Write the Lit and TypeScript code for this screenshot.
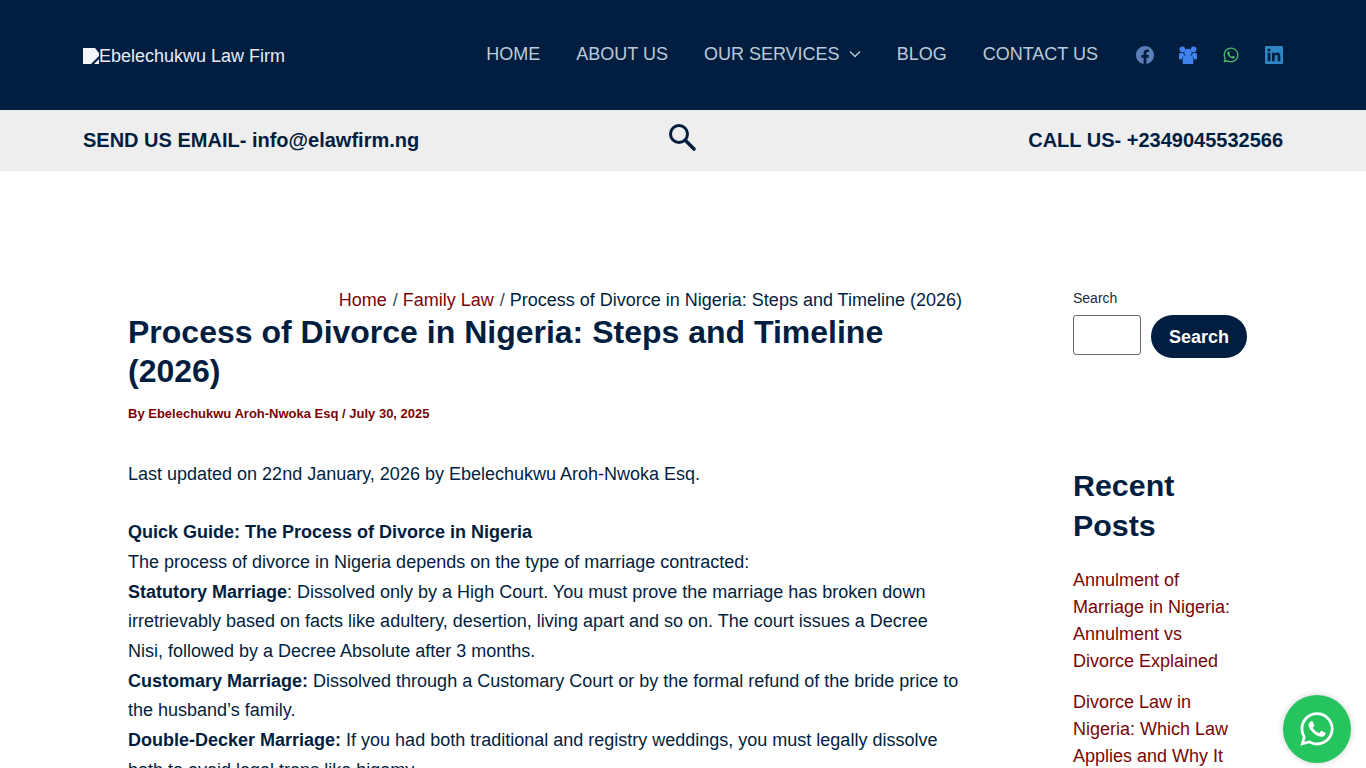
import { LitElement, html, css } from "lit";
import { customElement } from "lit/decorators.js";

@customElement("app-root")
export class AppRoot extends LitElement {
  static styles = css`
    :host { display: block; height: 768px; overflow: hidden; position: relative; background: #fff; font-family: "Liberation Sans", Arial, sans-serif; color: #011e40; }
    a { text-decoration: none; color: inherit; }
    .top { height: 110px; background: #011e40; display: flex; align-items: center; justify-content: space-between; padding: 0 83px; }
    .logo { display: flex; align-items: center; color: #e4edf6; font-size: 18px; line-height: 20px; padding-top: 2px; }
    .broken { width: 16px; height: 16px; display: block; flex: none; }
    .right { display: flex; align-items: center; }
    nav { display: flex; gap: 36px; color: #bccbda; font-size: 18px; line-height: 24px; padding-bottom: 3px; }
    nav a { display: flex; align-items: center; gap: 9px; }
    .social { display: flex; gap: 25px; margin-left: 38px; }
    .social svg { width: 18px; height: 18px; display: block; }
    .bar { height: 61px; background: #eeeeee; display: grid; grid-template-columns: 1fr auto 1fr; align-items: center; padding: 0 83px; font-size: 20px; font-weight: 700; color: #011e40; }
    .bar .mail { white-space: nowrap; }
    .bar .call { text-align: right; white-space: nowrap; }
    .bar svg { width: 30px; height: 30px; display: block; margin: -7px 1px 0 -1px; }
    .wrap { display: flex; padding: 117px 119px 0 128px; }
    main { width: 834px; flex: none; }
    .crumbs { text-align: right; font-size: 18px; line-height: 24px; color: #3a4a5e; }
    .crumbs a { color: #7a0505; margin-right: 1px; }
    .crumbs .cur { color: #011e40; }
    h1 { margin: 0; font-size: 32px; line-height: 39px; font-weight: 700; color: #011e40; padding-top: 1px; }
    .meta { font-size: 13px; line-height: 20px; font-weight: 700; color: #7a0505; margin-top: 13px; }
    .body { margin-top: 36px; font-size: 18px; line-height: 29.7px; color: #011e40; }
    .body p { margin: 0; }
    .body .gap { margin-bottom: 28.5px; }
    aside { margin-left: 111px; width: 174px; flex: none; }
    .label { font-size: 14px; line-height: 20px; color: #1d2b3a; display: block; }
    .search { display: flex; gap: 10px; margin-top: 7px; align-items: flex-start; }
    .input { width: 68px; height: 40px; border: 1px solid #666b70; border-radius: 3px; background: #fff; box-sizing: border-box; display: block; }
    .btn { width: 96px; height: 43px; border-radius: 22px; background: #011e40; color: #fff; font: 700 18px/42px "Liberation Sans", Arial, sans-serif; text-align: center; border: 0; padding: 1px 0 0; box-sizing: border-box; }
    h2 { margin: 107px 0 0; font-size: 30.4px; line-height: 40px; font-weight: 700; color: #011e40; }
    ul { list-style: none; margin: 22px 0 0; padding: 0; font-size: 18px; line-height: 27px; color: #7a0505; }
    li { margin-bottom: 14px; }
    .wa { position: absolute; left: 1283px; top: 695px; width: 68px; height: 68px; border-radius: 50%; background: #25c45f; display: flex; align-items: center; justify-content: center; box-shadow: 0 0 6px rgba(0,0,0,.2); }
    .wa svg { width: 40px; height: 40px; display: block; }
  `;

  private waPath = "M12.04 2C6.58 2 2.13 6.45 2.13 11.91c0 1.75.46 3.45 1.32 4.95L2.05 22l5.25-1.38c1.45.79 3.08 1.21 4.74 1.21 5.46 0 9.91-4.45 9.91-9.91 0-2.65-1.03-5.14-2.9-7.01A9.82 9.82 0 0 0 12.04 2zm.01 1.67c2.2 0 4.26.86 5.82 2.42a8.22 8.22 0 0 1 2.41 5.83c0 4.54-3.7 8.23-8.24 8.23-1.48 0-2.93-.39-4.19-1.15l-.3-.17-3.12.82.83-3.04-.2-.32a8.2 8.2 0 0 1-1.26-4.38c.01-4.54 3.7-8.24 8.25-8.24zM8.53 7.33c-.16 0-.43.06-.66.31-.22.25-.87.86-.87 2.07 0 1.22.89 2.39 1 2.56.14.17 1.76 2.67 4.25 3.73.59.27 1.05.42 1.41.53.59.19 1.13.16 1.56.1.48-.07 1.46-.6 1.67-1.18.21-.58.21-1.07.15-1.18-.07-.1-.23-.16-.48-.27-.25-.14-1.47-.74-1.69-.82-.23-.08-.37-.12-.56.12-.16.25-.64.81-.78.97-.15.17-.29.19-.53.07-.26-.13-1.06-.39-2-1.23-.74-.66-1.23-1.47-1.38-1.72-.12-.24-.01-.39.11-.5.11-.11.27-.29.37-.44.13-.14.17-.25.25-.41.08-.17.04-.31-.02-.43-.06-.11-.56-1.35-.77-1.84-.2-.48-.4-.42-.56-.43-.14 0-.3-.01-.47-.01z";

  render() {
    return html`
      <header class="top">
        <a class="logo" href="#">
          <svg class="broken" viewBox="0 0 16 16" aria-hidden="true"><path d="M0 0h12l4 5v3l-8 8H0z" fill="#f2f5f8"/><path d="M16 11v5h-5z" fill="#f2f5f8"/></svg>
          <span>Ebelechukwu Law Firm</span>
        </a>
        <div class="right">
          <nav>
            <a href="#">HOME</a>
            <a href="#">ABOUT US</a>
            <a href="#">OUR SERVICES
              <svg width="12" height="8" viewBox="0 0 12 8" aria-hidden="true"><path d="M1 1.5l5 5 5-5" fill="none" stroke="#bccbda" stroke-width="1.3"/></svg>
            </a>
            <a href="#">BLOG</a>
            <a href="#">CONTACT US</a>
          </nav>
          <div class="social">
            <svg viewBox="0 0 24 24" aria-hidden="true"><path fill="#5a7fb8" d="M24 12.07C24 5.4 18.63 0 12 0S0 5.4 0 12.07c0 6.03 4.39 11.03 10.13 11.93v-8.44H7.08v-3.49h3.05V9.41c0-3.02 1.79-4.69 4.53-4.69 1.31 0 2.69.24 2.69.24v2.97h-1.52c-1.49 0-1.95.93-1.95 1.89v2.25h3.33l-.53 3.49h-2.8V24C19.61 23.1 24 18.1 24 12.07z"/></svg>
            <svg viewBox="0 0 24 24" aria-hidden="true"><g fill="#3f83f0"><circle cx="12" cy="8.500" r="5"/><circle cx="4.500" cy="4.500" r="3.700"/><circle cx="19.500" cy="4.500" r="3.700"/><path d="M5 24v-6.500c0-3 2-4.500 4-4.500h6c2 0 4 1.500 4 4.500V24z"/><path d="M0 16v-4c0-2 1.300-3 3-3h2.500c.4 1.500 1 3 2.500 4-2.500 1-4 3-4 5H1.500C.6 18 0 17 0 16z"/><path d="M24 16v-4c0-2-1.300-3-3-3h-2.500c-.4 1.500-1 3-2.500 4 2.500 1 4 3 4 5h2.500c.9 0 1.500-1 1.500-2z"/></g></svg>
            <svg viewBox="0 0 24 24" aria-hidden="true"><path fill="#4fbf6b" d="${this.waPath}"/></svg>
            <svg viewBox="0 0 24 24" aria-hidden="true"><path fill="#2f86c5" d="M20.45 20.45h-3.55v-5.57c0-1.33-.03-3.04-1.85-3.04-1.85 0-2.14 1.45-2.14 2.94v5.67H9.35V9h3.41v1.56h.05c.48-.9 1.64-1.85 3.37-1.85 3.6 0 4.27 2.37 4.27 5.46v6.28zM5.34 7.43a2.06 2.06 0 1 1 0-4.12 2.06 2.06 0 0 1 0 4.12zM7.12 20.45H3.56V9h3.56zM22.23 0H1.77C.79 0 0 .77 0 1.73v20.54C0 23.23.79 24 1.770 24h20.450c.98 0 1.780-.77 1.780-1.730V1.730C24 .77 23.200 0 22.230 0z"/></svg>
          </div>
        </div>
      </header>
      <div class="bar">
        <div class="mail">SEND US EMAIL- <a href="#">info@elawfirm.ng</a></div>
        <svg viewBox="0 0 30 30" aria-hidden="true"><circle cx="12" cy="12" r="8.500" fill="none" stroke="#011e40" stroke-width="3"/><path d="M18.500 18.500L27 27" stroke="#011e40" stroke-width="3.600" stroke-linecap="round"/></svg>
        <div class="call">CALL US- +2349045532566</div>
      </div>
      <div class="wrap">
        <main>
          <div class="crumbs"><a href="#">Home</a> / <a href="#">Family Law</a> / <span class="cur">Process of Divorce in Nigeria: Steps and Timeline (2026)</span></div>
          <h1>Process of Divorce in Nigeria: Steps and Timeline (2026)</h1>
          <div class="meta">By Ebelechukwu Aroh-Nwoka Esq / July 30, 2025</div>
          <div class="body">
            <p class="gap">Last updated on 22nd January, 2026 by Ebelechukwu Aroh-Nwoka Esq.</p>
            <p><b>Quick Guide: The Process of Divorce in Nigeria</b></p>
            <p>The process of divorce in Nigeria depends on the type of marriage contracted:</p>
            <p><b>Statutory Marriage</b>: Dissolved only by a High Court. You must prove the marriage has broken down irretrievably based on facts like adultery, desertion, living apart and so on. The court issues a Decree Nisi, followed by a Decree Absolute after 3 months.</p>
            <p><b>Customary Marriage:</b> Dissolved through a Customary Court or by the formal refund of the bride price to the husband’s family.</p>
            <p><b>Double-Decker Marriage:</b> If you had both traditional and registry weddings, you must legally dissolve both to avoid legal traps like bigamy.</p>
          </div>
        </main>
        <aside>
          <span class="label">Search</span>
          <div class="search">
            <div class="input"></div>
            <button class="btn">Search</button>
          </div>
          <h2>Recent Posts</h2>
          <ul>
            <li><a href="#">Annulment of Marriage in Nigeria: Annulment vs Divorce Explained</a></li>
            <li><a href="#">Divorce Law in Nigeria: Which Law Applies and Why It Matters</a></li>
          </ul>
        </aside>
      </div>
      <a class="wa" href="#"><svg viewBox="0 0 24 24" aria-hidden="true"><path fill="#fff" d="${this.waPath}"/></svg></a>
    `;
  }
}
